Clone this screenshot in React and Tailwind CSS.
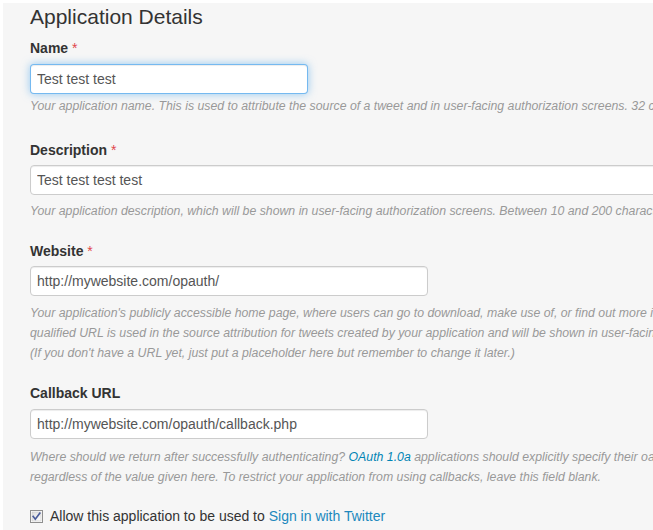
import React from "react";

const font = { fontFamily: '"Liberation Sans", Arial, Helvetica, sans-serif' };

function Label({ children, required, className = "" }) {
  return (
    <div className={`text-[14px] font-bold leading-[20px] text-[#333] ${className}`}>
      {children}
      {required && <span className="font-normal text-[#e0474c]"> *</span>}
    </div>
  );
}

function Field({ value, width, focused }) {
  return (
    <input
      readOnly
      value={value}
      className={`block h-[30px] ${width} rounded-[4px] border bg-white px-[6px] text-[14px] leading-[20px] text-[#555] outline-none ${
        focused
          ? "border-[rgba(82,168,236,0.8)] shadow-[inset_0_1px_1px_rgba(0,0,0,0.075),0_0_8px_rgba(82,168,236,0.6)]"
          : "border-[#ccc] shadow-[inset_0_1px_1px_rgba(0,0,0,0.075)]"
      }`}
    />
  );
}

function Help({ children, className = "" }) {
  return (
    <div className={`whitespace-nowrap text-[12.3px] italic leading-[20px] text-[#999] ${className}`}>
      {children}
    </div>
  );
}

export default function App() {
  return (
    <div className="h-[530px] w-[653px] overflow-hidden bg-white pl-[3px] pt-[3px]" style={font}>
      <div className="h-full w-[900px] bg-[#f6f6f6] pl-[27px] pt-[1px]">
        <h3 className="text-[21px] font-normal leading-[26px] text-[#333]">Application Details</h3>

        <Label required className="mt-[8px] mb-[6px]">Name</Label>
        <Field value="Test test test" width="w-[278px]" focused />
        <Help className="mt-[2px]">
          Your application name. This is used to attribute the source of a tweet and in user-facing authorization screens. 32 characters max.
        </Help>

        <Label required className="mt-[24px] mb-[5px]">Description</Label>
        <Field value="Test test test test" width="w-[720px]" />
        <Help className="mt-[6px]">
          Your application description, which will be shown in user-facing authorization screens. Between 10 and 200 characters max.
        </Help>

        <Label required className="mt-[20px] mb-[5px]">Website</Label>
        <Field value="http://mywebsite.com/opauth/" width="w-[398px]" />
        <Help className="mt-[7px]">
          Your application's publicly accessible home page, where users can go to download, make use of, or find out more information about your application. This fully-
          <br />
          qualified URL is used in the source attribution for tweets created by your application and will be shown in user-facing authorization screens.
          <br />
          (If you don't have a URL yet, just put a placeholder here but remember to change it later.)
        </Help>

        <Label className="mt-[20px] mb-[6px]">Callback URL</Label>
        <Field value="http://mywebsite.com/opauth/callback.php" width="w-[398px]" />
        <Help className="mt-[8px]">
          Where should we return after successfully authenticating?{" "}
          <span className="text-[#0084b4]">OAuth 1.0a</span> applications should explicitly specify their oauth_callback URL on the request token step,
          <br />
          regardless of the value given here. To restrict your application from using callbacks, leave this field blank.
        </Help>

        <div className="mt-[19px] flex items-center text-[14px] leading-[20px] text-[#333]">
          <svg width="13" height="13" viewBox="0 0 13 13" className="mr-[7px] shrink-0">
            <defs>
              <linearGradient id="cbg" x1="0" y1="0" x2="1" y2="1">
                <stop offset="0" stopColor="#dcdcdc" />
                <stop offset="1" stopColor="#ffffff" />
              </linearGradient>
            </defs>
            <rect x="0.5" y="0.5" width="12" height="12" fill="#fff" stroke="#8f8f8f" />
            <rect x="2" y="2" width="9" height="9" fill="url(#cbg)" stroke="#c6c6c6" strokeWidth="0.6" />
            <path d="M3.2 6.4 L5.3 9.2 L9.8 3.2" fill="none" stroke="#4a5c9a" strokeWidth="1.7" strokeLinecap="square" />
          </svg>
          <span>
            Allow this application to be used to <span className="text-[#2088bd]">Sign in with Twitter</span>
          </span>
        </div>
      </div>
    </div>
  );
}
